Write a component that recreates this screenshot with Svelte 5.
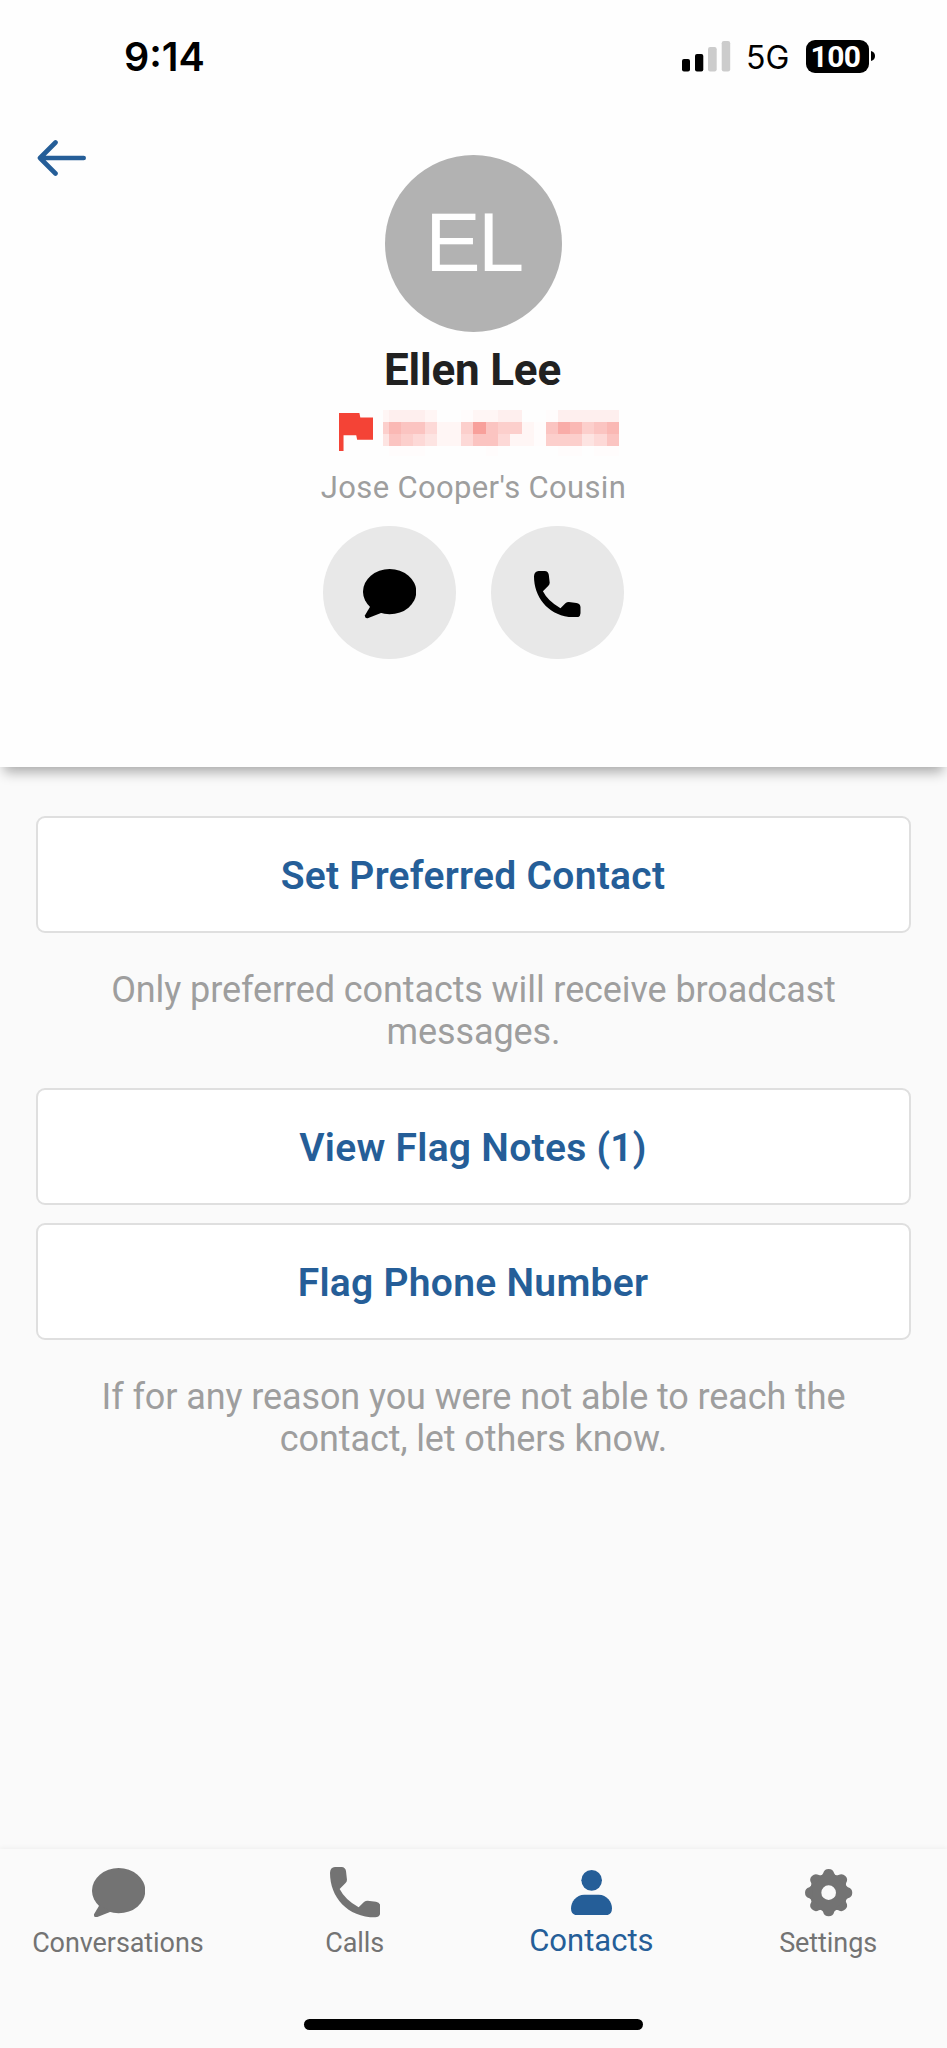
<script>
  const tone = ['transparent', '#fffcfc', '#fff6f5', '#feefee', '#fde4e2', '#fdd9d7', '#fccfcc', '#fbc4c1', '#fab8b4', '#f9aca8', '#f8a09b'];
  const cells = [
    [2, 3, 3, 3, 2, 0, 0, 1, 2, 2, 3, 3, 0, 0, 1, 3, 3, 3, 3, 3, 3],
    [6, 8, 7, 7, 5, 2, 2, 6, 10, 7, 6, 6, 2, 1, 7, 9, 8, 6, 7, 8, 8],
    [4, 7, 6, 5, 4, 2, 2, 5, 7, 7, 5, 2, 2, 1, 6, 6, 6, 4, 5, 7, 7],
    [0, 1, 1, 1, 0, 0, 0, 0, 0, 1, 0, 0, 0, 0, 0, 1, 1, 0, 1, 1, 1]
  ];
  const tabs = ['Conversations', 'Calls', 'Contacts', 'Settings'];
</script>

{#snippet bubble()}
  <svg class="bubble" viewBox="0 0 160 148"><ellipse cx="80" cy="68" rx="80" ry="68" /><path d="M23 110 L6 139 Q5 149 14 148 L56 131 Z" /></svg>
{/snippet}
{#snippet phone()}
  <svg class="phone" viewBox="0 0 151 151"><path d="M15 0H35Q46 1 48 12L51 38Q51 44 46 49L29 66Q45 98 86 121L102 105Q107 101 113 101L138 104Q150 106 151 117V137Q150 151 136 151C52 151 0 90 0 17Q1 1 15 0Z" /></svg>
{/snippet}

<div class="screen">
  <header>
    <div class="status">
      <span class="time">9:14</span>
      <div class="signals">
        <svg width="49" height="31" viewBox="0 0 49 31"><rect y="18" width="8" height="12.5" rx="2" /><rect x="13" y="13" width="8.3" height="17.5" rx="2" /><g fill="#ccc"><rect x="26" y="6" width="8.7" height="24.5" rx="2.2" /><rect x="39.7" y="0" width="8.5" height="30.5" rx="2.2" /></g></svg>
        <span class="net">5G</span>
        <span class="battery">100</span>
        <svg class="tip" width="4" height="10" viewBox="0 0 4 10"><path d="M0 0Q4 1 4 5T0 10Z" /></svg>
      </div>
    </div>
    <svg class="back" width="49" height="36" viewBox="0 0 49 36"><path d="M46.7 18H3M18.5 2.5L3 18L18.5 33.5" /></svg>
    <div class="avatar">EL</div>
    <h1>Ellen Lee</h1>
    <div class="number">
      <svg class="flag" width="34" height="38" viewBox="5 4 15 17" preserveAspectRatio="none"><path d="M14.4 6L14 4H5v17h2v-7h5.6l.4 2h7V6z" /></svg>
      <svg class="mask" width="236" height="47" viewBox="0 0 236 47" shape-rendering="crispEdges">
        {#each cells as row, r}
          {#each row as v, c}
            <rect x={c === 0 ? 0 : 5.7 + (c - 1) * 12.1} y={r * 12} width={c === 0 ? 6 : 12.1} height={r === 3 ? 10 : 12} fill={tone[v]} />
          {/each}
        {/each}
      </svg>
    </div>
    <p class="relation">Jose Cooper's Cousin</p>
    <div class="actions">
      <button>{@render bubble()}</button>
      <button class="call">{@render phone()}</button>
    </div>
  </header>
  <main>
    <button>Set Preferred Contact</button>
    <p>Only preferred contacts will receive broadcast<br />messages.</p>
    <button>View Flag Notes (1)</button>
    <button class="next">Flag Phone Number</button>
    <p>If for any reason you were not able to reach the<br />contact, let others know.</p>
  </main>
  <nav>
    <div class="tabs">
      {#each tabs as tab}
        <div class="tab" class:active={tab === 'Contacts'}>
          <div class="icon">
            {#if tab === 'Conversations'}
              {@render bubble()}
            {:else if tab === 'Calls'}
              {@render phone()}
            {:else if tab === 'Contacts'}
              <svg class="person" viewBox="0 0 123 136"><circle cx="62" cy="31" r="31" /><path d="M40 74H83C108 74 123 96 123 115Q123 136 103 136H20Q0 136 0 115C0 96 15 74 40 74Z" /></svg>
            {:else}
              <svg class="gear" viewBox="-74 -74 148 148">
                <circle r="39.5" fill="none" stroke="currentColor" stroke-width="35" />
                {#each [0, 45, 90, 135, 180, 225, 270, 315] as a}
                  <path transform="rotate({a})" d="M-25 -49Q-18 -53 -16.5 -58A17 17 0 0 1 16.5 -58Q18 -53 25 -49Z" />
                {/each}
              </svg>
            {/if}
          </div>
          <span>{tab}</span>
        </div>
      {/each}
    </div>
    <div class="home"></div>
  </nav>
</div>

<style>
  :global(body) { margin: 0; }
  .screen { width: 947px; height: 2048px; display: flex; flex-direction: column; background: #fafafa; font-family: Roboto, sans-serif; overflow: hidden; }
  svg { display: block; fill: currentColor; }
  p, h1 { margin: 0; }
  button { padding: 0; font: inherit; }
  header { position: relative; z-index: 1; height: 767px; box-sizing: border-box; background: #fefefe; display: flex; flex-direction: column; align-items: center; box-shadow: 0 9px 12px -4px rgba(0, 0, 0, 0.33); }
  .status { width: 100%; height: 116px; flex-shrink: 0; box-sizing: border-box; padding: 0 72px 4px 124px; display: flex; justify-content: space-between; align-items: center; font-family: Inter, sans-serif; color: #000; }
  .time { font-size: 39.5px; font-weight: 600; letter-spacing: 0; padding-top: 1px; }
  .signals { display: flex; align-items: center; }
  .net { font-size: 32px; font-weight: 400; width: 45px; margin-left: 15px; margin-right: 15px; padding-top: 3px; }
  .battery { width: 63px; height: 33px; box-sizing: border-box; padding-right: 4px; border-radius: 9px; background: #000; color: #fff; text-align: center; font-family: Roboto, sans-serif; font-size: 30px; line-height: 33px; font-weight: 700; letter-spacing: -0.5px; }
  .tip { margin-left: 2px; }
  .back { align-self: flex-start; margin: 24px 0 0 37px; fill: none; stroke: #255e98; stroke-width: 4.6; stroke-linecap: round; stroke-linejoin: round; height: 36px; flex-shrink: 0; }
  .avatar { width: 177px; height: 177px; flex-shrink: 0; margin-top: -21px; box-sizing: border-box; border-radius: 50%; background: #b2b2b2; color: #fff; font-family: "Liberation Sans", sans-serif; font-size: 83px; line-height: 176px; letter-spacing: -2.5px; text-align: center; }
  h1 { font-size: 44px; line-height: 52px; font-weight: 700; margin-top: 12px; color: #212121; letter-spacing: -0.2px; padding-right: 2px; }
  .number { display: flex; width: 280px; height: 47px; margin-top: 14px; align-self: flex-start; margin-left: 339px; }
  .flag { color: #f44336; margin-top: 3px; margin-right: 10px; }
  .relation { font-size: 31px; line-height: 36px; color: #9e9e9e; letter-spacing: 0.34px; margin-top: 13px; }
  .actions { display: flex; gap: 35px; margin-top: 20px; }
  .actions button { width: 133px; height: 133px; box-sizing: border-box; padding-top: 3px; border: 0; border-radius: 50%; background: #e8e8e8; color: #000; display: flex; align-items: center; justify-content: center; }
  .bubble { width: 53.3px; height: 49.3px; }
  .phone { width: 50.3px; height: 50.3px; }
  .call .phone { width: 46.5px; height: 46.5px; }
  main { flex: 1; padding: 49px 36px 0; display: flex; flex-direction: column; }
  main button { height: 117px; box-sizing: border-box; border: 2px solid #dfdfdf; border-radius: 9px; background: #fff; color: #255e98; font-size: 39px; font-weight: 600; line-height: 46px; padding: 2px 1px 0 0; letter-spacing: 0.28px; }
  main .next { margin-top: 18px; }
  main p { height: 84px; margin: 36px 0 35px; text-align: center; font-size: 36px; line-height: 42px; color: #9e9e9e; letter-spacing: -0.1px; }
  nav { height: 199px; box-shadow: 0 0 6px rgba(0, 0, 0, 0.07); background: #fafafa; display: flex; flex-direction: column; align-items: center; justify-content: space-between; }
  .tabs { display: grid; grid-template-columns: repeat(4, 1fr); width: 100%; }
  .tab { display: flex; flex-direction: column; align-items: center; color: #737373; font-size: 27px; line-height: 32px; letter-spacing: -0.08px; }
  .icon { height: 51px; padding-top: 18px; display: flex; align-items: center; }
  .tab span { margin-top: 9px; padding-right: 1px; }
  .active { color: #255e98; font-size: 31px; letter-spacing: 0; }
  .active span { margin-top: 7px; }
  .person { width: 41px; height: 45.3px; }
  .gear { width: 49.3px; height: 49.3px; }
  .home { width: 339px; height: 11px; border-radius: 6px; background: #000; margin-bottom: 18px; }
</style>
